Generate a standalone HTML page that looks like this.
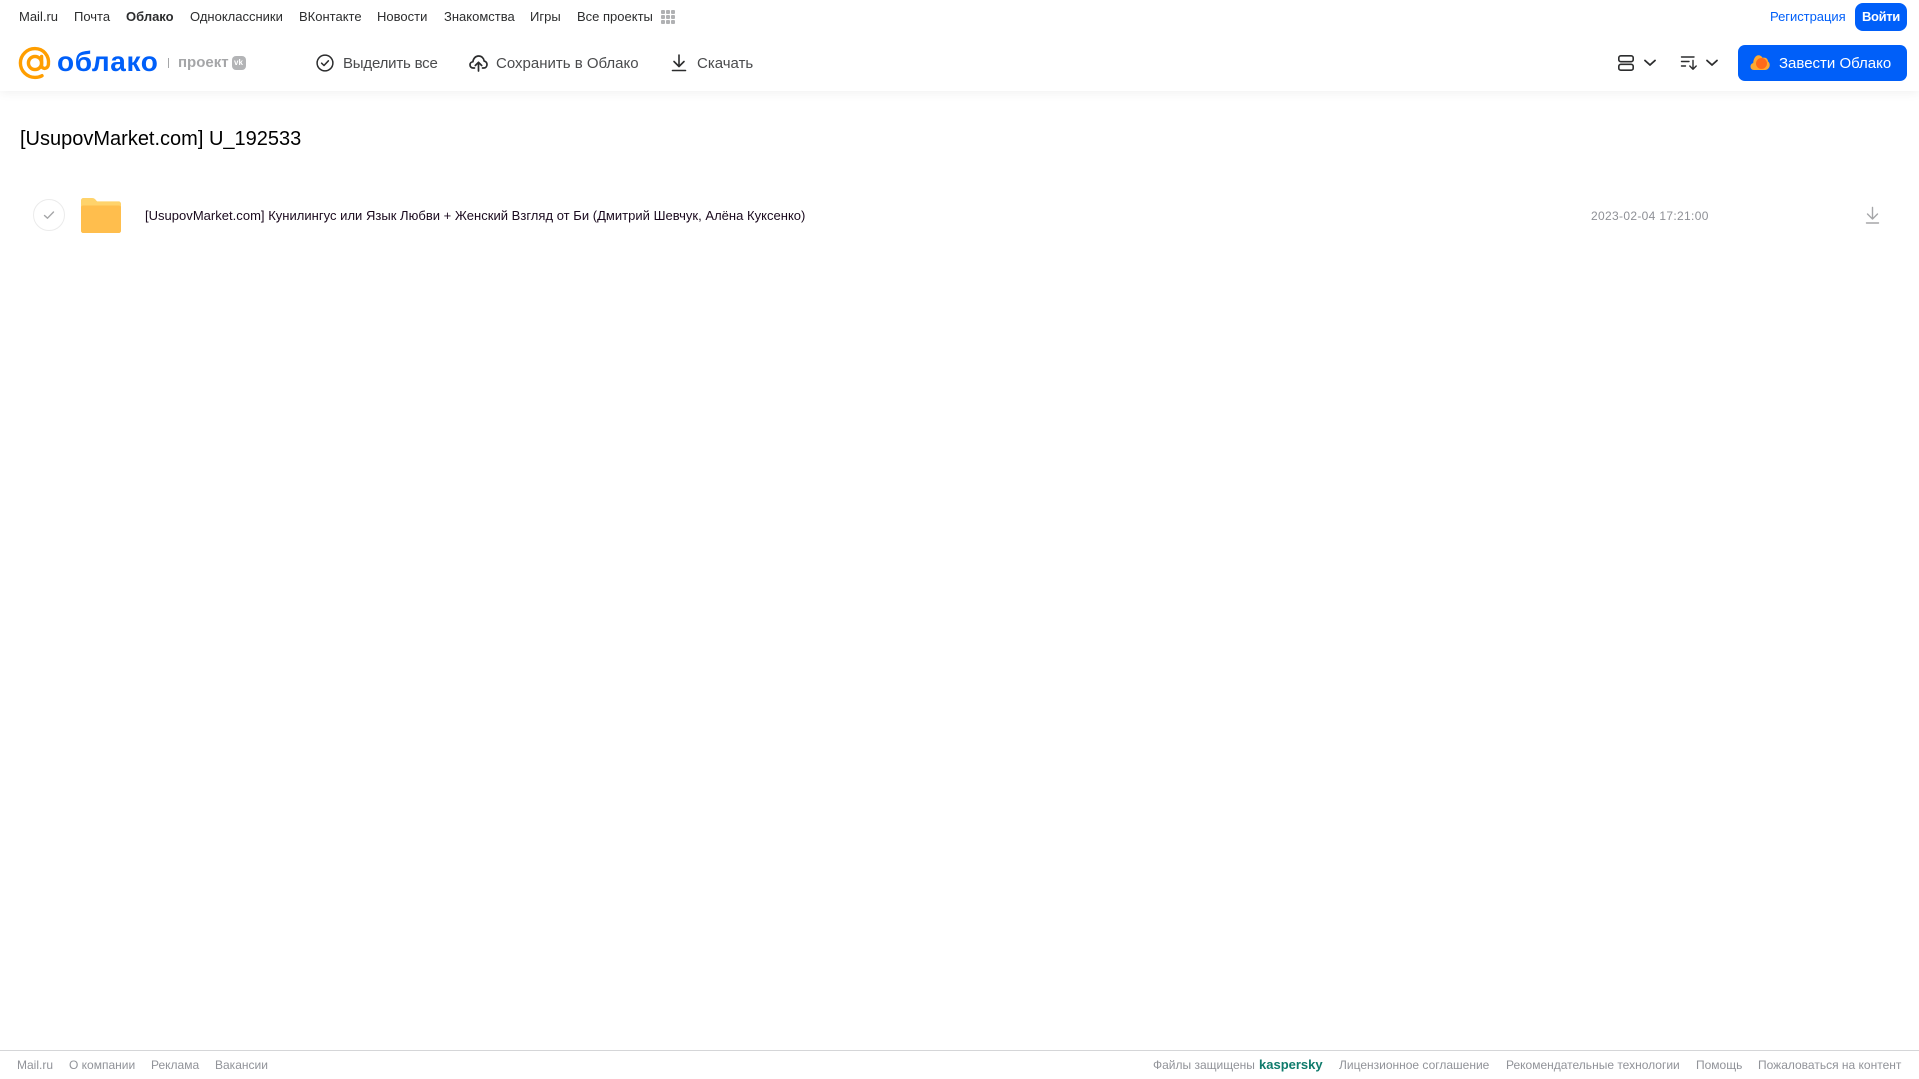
<!DOCTYPE html>
<html lang="ru">
<head>
<meta charset="utf-8">
<title>Облако</title>
<style>
html,body{margin:0;padding:0;width:1919px;height:1079px;overflow:hidden;background:#fff}
body{position:relative;font-family:"Liberation Sans",sans-serif}
.t{position:absolute;white-space:nowrap;line-height:20px;height:20px}
.n{top:7px;font-size:13px;color:#2c2d2e}
.a{top:54px;font-size:15px;color:#4a4b4d}
.f{top:1055px;font-size:12px;color:#919399}
svg{position:absolute;display:block}
</style>
</head>
<body>
<div style="position:absolute;left:0;top:0;width:1919px;height:91px;background:#fff;box-shadow:0 2px 10px rgba(0,0,0,.06)"></div>

<span class="t n" style="left:19px">Mail.ru</span>
<span class="t n" style="left:74px">Почта</span>
<span class="t n" style="left:126px;font-weight:bold">Облако</span>
<span class="t n" style="left:190px">Одноклассники</span>
<span class="t n" style="left:299px">ВКонтакте</span>
<span class="t n" style="left:377px">Новости</span>
<span class="t n" style="left:444px">Знакомства</span>
<span class="t n" style="left:530px">Игры</span>
<span class="t n" style="left:577px">Все проекты</span>
<svg style="left:660px;top:9px" width="16" height="16" viewBox="0 0 16 16" fill="#b0b1b3">
<rect x="1" y="1" width="4" height="4" rx="1"/><rect x="6" y="1" width="4" height="4" rx="1"/><rect x="11" y="1" width="4" height="4" rx="1"/>
<rect x="1" y="6" width="4" height="4" rx="1"/><rect x="6" y="6" width="4" height="4" rx="1"/><rect x="11" y="6" width="4" height="4" rx="1"/>
<rect x="1" y="11" width="4" height="4" rx="1"/><rect x="6" y="11" width="4" height="4" rx="1"/><rect x="11" y="11" width="4" height="4" rx="1"/>
</svg>

<span class="t" style="left:1770px;top:7px;font-size:13px;color:#005ff9;letter-spacing:-.03px">Регистрация</span>
<div style="position:absolute;left:1855px;top:3px;width:52px;height:28px;border-radius:8px;background:#005ff9"></div>
<span class="t" style="left:1862px;top:7px;font-size:13px;font-weight:bold;color:#fff;letter-spacing:-.35px">Войти</span>

<!-- logo -->
<svg style="left:18px;top:46px" width="34" height="34" viewBox="0 0 34 34" fill="none">
<circle cx="17" cy="17" r="6.6" stroke="#ff9e00" stroke-width="3.4"/>
<path d="M23.6 10.5V19.5C23.6 23.5 29.8 23.5 30.4 18.6C31.6 9.4 25 2.6 17 2.6C9 2.6 2.4 9 2.4 17C2.4 25 9 31.4 17 31.4C19.6 31.4 22 30.8 24 29.7" stroke="#ff9e00" stroke-width="3.4" stroke-linecap="round"/>
</svg>
<span class="t" style="left:57px;top:45px;height:34px;line-height:34px;font-size:28px;font-weight:bold;color:#005ff9;letter-spacing:.6px">облако</span>
<div style="position:absolute;left:168px;top:58px;width:1px;height:10px;background:#a5a6a8"></div>
<span class="t" style="left:178px;top:53px;font-size:15px;font-weight:bold;color:#a5a6a8;letter-spacing:0">проект</span>
<div style="position:absolute;left:232px;top:56px;width:14px;height:14px;border-radius:4px;background:#b3b4b6"></div>
<span class="t" style="left:234px;top:53px;font-size:8px;font-weight:bold;color:#fff">vk</span>

<!-- action bar -->
<svg style="left:316px;top:54px" width="18" height="18" viewBox="0 0 18 18" fill="none" stroke="#2c2d2e" stroke-width="1.5">
<circle cx="9" cy="9" r="7.9"/><path d="M5.6 9.2L8 11.5L12.4 6.8" stroke-linecap="round" stroke-linejoin="round"/>
</svg>
<span class="t a" style="left:343px;letter-spacing:-.2px">Выделить все</span>

<svg style="left:469px;top:54px" width="19" height="18" viewBox="0 0 19 18" fill="none" stroke="#2c2d2e" stroke-width="1.7" stroke-linecap="round" stroke-linejoin="round">
<path d="M5.5 14H4.2C2.3 14 1 12.6 1 10.9C1 9.2 2.2 7.9 3.9 7.8C4.3 4.4 6.6 2 9.6 2C12.5 2 14.7 4.1 15.2 7.1C17 7.4 18 8.9 18 10.5C18 12.5 16.6 14 14.7 14H13.5"/>
<path d="M9.5 17V8.5M6.3 11.5L9.5 8.3L12.7 11.5"/>
</svg>
<span class="t a" style="left:496px">Сохранить в Облако</span>

<svg style="left:671px;top:54px" width="16" height="18" viewBox="0 0 16 18" fill="none" stroke="#2c2d2e" stroke-width="1.6" stroke-linecap="round" stroke-linejoin="round">
<path d="M8 1V12M3 7.5L8 12.5L13 7.5"/><path d="M1.5 16.5H14.5"/>
</svg>
<span class="t a" style="left:697px">Скачать</span>

<!-- right controls -->
<svg style="left:1617px;top:54px" width="18" height="18" viewBox="0 0 18 18" fill="none" stroke="#2c2d2e" stroke-width="1.6">
<rect x="1.8" y="1.8" width="14.4" height="5.9" rx="2"/><rect x="1.8" y="10.3" width="14.4" height="5.9" rx="2"/>
</svg>
<svg style="left:1643px;top:58px" width="14" height="10" viewBox="0 0 14 10" fill="none" stroke="#2c2d2e" stroke-width="1.8" stroke-linecap="round" stroke-linejoin="round"><path d="M2 2.5L7 7L12 2.5"/></svg>
<svg style="left:1680px;top:55px" width="18" height="16" viewBox="0 0 18 16" fill="none" stroke="#2c2d2e" stroke-width="1.4" stroke-linecap="round" stroke-linejoin="round">
<path d="M1.5 2H14M1.5 6.5H9M1.5 11H5.5"/><path d="M13 5.5V14M9.8 11L13 14.2L16.2 11"/>
</svg>
<svg style="left:1705px;top:58px" width="14" height="10" viewBox="0 0 14 10" fill="none" stroke="#2c2d2e" stroke-width="1.8" stroke-linecap="round" stroke-linejoin="round"><path d="M2 2.5L7 7L12 2.5"/></svg>

<div style="position:absolute;left:1738px;top:45px;width:169px;height:36px;border-radius:7px;background:#005ff9"></div>
<svg style="left:1750px;top:54px" width="20" height="17" viewBox="0 0 20 17">
<path d="M4 16C1.8 16 .5 14.4 .5 12.5C.5 10.8 1.6 9.4 3.2 9C3.4 5 5.5 1.2 8.6 1.2C10.4 1.2 11.8 2.4 12.5 3.8C13 3.6 13.4 3.6 14 3.6C16.4 3.6 18 5.4 18 7.4C19.2 8.2 19.7 9.6 19.7 11C19.7 13.8 17.6 16 15 16Z" fill="#ffa930"/>
<circle cx="11.5" cy="9.5" r="5.5" fill="#ff6a1a"/>
</svg>
<span class="t" style="left:1779px;top:54px;font-size:15px;color:#fff">Завести Облако</span>

<!-- title -->
<span class="t" style="left:20px;top:125px;height:28px;line-height:28px;font-size:20px;color:#000">[UsupovMarket.com] U_192533</span>

<!-- row -->
<div style="position:absolute;left:33px;top:199px;width:30px;height:30px;border-radius:50%;border:1px solid #ebebeb;background:#fff"></div>
<svg style="left:43px;top:209px" width="12" height="12" viewBox="0 0 12 12" fill="none" stroke="#a5a6a8" stroke-width="1.4" stroke-linecap="round" stroke-linejoin="round"><path d="M1.5 6.5L4.5 9.2L10.5 3"/></svg>
<svg style="left:81px;top:198px" width="40" height="35" viewBox="0 0 40 35">
<path d="M2.5 0H11C13 0 14 .8 15 2.2L16.2 3.4H37.5C39 3.4 40 4.4 40 6V32.5C40 34 39 35 37.5 35H2.5C1 35 0 34 0 32.5V2.5C0 1 1 0 2.5 0Z" fill="#ffd36b"/>
<path d="M0 9.5C0 8 1 7.5 2.5 7.5H37.5C39 7.5 40 8 40 9.5V32.5C40 34 39 35 37.5 35H2.5C1 35 0 34 0 32.5Z" fill="#ffbe4d"/>
</svg>
<span class="t" style="left:145px;top:206px;font-size:13px;color:#1a0a1e;letter-spacing:.02px">[UsupovMarket.com] Кунилингус или Язык Любви + Женский Взгляд от Би (Дмитрий Шевчук, Алёна Куксенко)</span>
<span class="t" style="left:1591px;top:206px;font-size:12px;color:#8e9096;letter-spacing:.33px">2023-02-04 17:21:00</span>
<svg style="left:1865px;top:206px" width="15" height="19" viewBox="0 0 15 19" fill="none" stroke="#a5a6a8" stroke-width="1.4" stroke-linecap="round" stroke-linejoin="round">
<path d="M7.5 1.5V12.5M2.5 8L7.5 13L12.5 8"/><path d="M1.5 17H13.5"/>
</svg>

<!-- footer -->
<div style="position:absolute;left:0;top:1050px;width:1919px;height:1px;background:#d5d6d8"></div>
<span class="t f" style="left:17px">Mail.ru</span>
<span class="t f" style="left:69px">О компании</span>
<span class="t f" style="left:151px">Реклама</span>
<span class="t f" style="left:215px">Вакансии</span>
<span class="t f" style="left:1153px">Файлы защищены</span>
<span class="t f" style="left:1259px;font-size:13px;font-weight:bold;color:#0f7b6c">kaspersky</span>
<span class="t f" style="left:1339px">Лицензионное соглашение</span>
<span class="t f" style="left:1506px">Рекомендательные технологии</span>
<span class="t f" style="left:1696px">Помощь</span>
<span class="t f" style="left:1758px">Пожаловаться на контент</span>
</body>
</html>
